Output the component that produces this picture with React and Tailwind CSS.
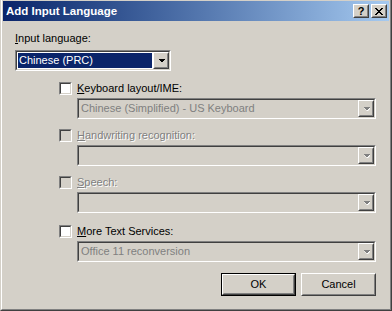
import React from 'react';

const raised =
  'border border-t-white border-l-white border-r-[#404040] border-b-[#404040]';
const raisedInner =
  'border border-t-[#d4d0c8] border-l-[#d4d0c8] border-r-[#808080] border-b-[#808080]';
const sunken =
  'border border-t-[#808080] border-l-[#808080] border-r-white border-b-white';
const sunkenInner =
  'border border-t-[#404040] border-l-[#404040] border-r-[#d4d0c8] border-b-[#d4d0c8]';

function Arrow({ disabled }) {
  return (
    <svg width="7" height="4" viewBox="0 0 7 4" className="block">
      {disabled && <path d="M1 1h7L4.5 4.5z" fill="#fff" />}
      <path d="M0 0h7L3.5 3.5z" fill={disabled ? '#808080' : '#000'} shapeRendering="crispEdges" />
    </svg>
  );
}

function DropButton({ disabled }) {
  return (
    <div className={`w-[16px] h-full ${raised} bg-[#d4d0c8]`}>
      <div className={`w-full h-full ${raisedInner} flex items-center justify-center`}>
        <Arrow disabled={disabled} />
      </div>
    </div>
  );
}

function Check({ disabled }) {
  return (
    <span className={`block w-[13px] h-[13px] shrink-0 ${sunken}`}>
      <span className={`block w-full h-full ${sunkenInner} ${disabled ? 'bg-[#d4d0c8]' : 'bg-white'}`} />
    </span>
  );
}

function Label({ disabled, hot, rest }) {
  return (
    <span
      className={`leading-[13px] ${disabled ? 'text-[#808080] [text-shadow:1px_1px_0_#fff]' : 'text-black'}`}
    >
      <span className="underline underline-offset-[1px]">{hot}</span>
      {rest}
    </span>
  );
}

function Combo({ text }) {
  return (
    <div className={`ml-[74px] mr-[13px] h-[21px] ${sunken}`}>
      <div className={`h-full ${sunkenInner} bg-[#d4d0c8] flex items-stretch`}>
        <div className="flex-1 pl-[2px] flex items-center text-[#808080] leading-[13px]">{text}</div>
        <DropButton disabled />
      </div>
    </div>
  );
}

function Group({ disabled, hot, rest, text, gap }) {
  return (
    <div className={gap}>
      <div className="ml-[56px] flex items-center gap-[5px] h-[13px]">
        <Check disabled={disabled} />
        <Label disabled={disabled} hot={hot} rest={rest} />
      </div>
      <div className="mt-[3px]">
        <Combo text={text} />
      </div>
    </div>
  );
}

function PushButton({ label, isDefault }) {
  const body = (
    <div className={`w-full h-full ${raised}`}>
      <div className={`w-full h-full ${raisedInner} flex items-center justify-center`}>{label}</div>
    </div>
  );
  return (
    <div className={`w-[75px] h-[23px] ${isDefault ? 'border border-black' : ''}`}>{body}</div>
  );
}

export default function App() {
  return (
    <div className="w-[392px] h-[311px] bg-[#d4d0c8] font-['Liberation_Sans',Arial,sans-serif] text-[11px] text-black">
      <div className="w-full h-full border-r border-b border-r-[#404040] border-b-[#404040] border-l border-l-[#d4d0c8]">
        <div className="w-full h-full border-r border-b border-r-[#808080] border-b-[#808080] border-l border-l-white pt-px px-px flex flex-col">
          <div className="h-[20px] shrink-0 bg-linear-to-r from-[#0a246a] to-[#a6caf0] flex items-center pl-[3px] pr-[2px]">
            <span className="text-white font-bold text-[11.5px] leading-[13px]">Add Input Language</span>
            <div className="ml-auto flex items-center gap-[2px]">
              <div className={`w-[16px] h-[14px] ${raised} bg-[#d4d0c8]`}>
                <div className={`w-full h-full ${raisedInner} flex items-center justify-center text-[11px] font-bold leading-none`}>
                  ?
                </div>
              </div>
              <div className={`w-[16px] h-[14px] ${raised} bg-[#d4d0c8]`}>
                <div className={`w-full h-full ${raisedInner} flex items-center justify-center`}>
                  <svg width="8" height="7" viewBox="0 0 8 7" shapeRendering="crispEdges">
                    <path
                      d="M0 0h2v1h1v1h2V1h1V0h2v1H7v1H6v1H5v1h1v1h1v1h1v1H6V6H5V5H3v1H2v1H0V6h1V5h1V4h1V3H2V2H1V1H0z"
                      fill="#000"
                    />
                  </svg>
                </div>
              </div>
            </div>
          </div>

          <div className="flex-1 flex flex-col">
            <div className="mt-[11px] ml-[12px] leading-[13px]">
              <span className="underline underline-offset-[1px]">I</span>nput language:
            </div>
            <div className={`mt-[5px] ml-[12px] w-[156px] h-[21px] ${sunken}`}>
              <div className={`h-full ${sunkenInner} bg-white flex items-stretch`}>
                <div className="flex-1 m-px bg-[#0a246a] text-white flex items-center pl-[1px] leading-[13px]">
                  Chinese (PRC)
                </div>
                <DropButton />
              </div>
            </div>

            <Group gap="mt-[11px]" hot="K" rest="eyboard layout/IME:" text="Chinese (Simplified) - US Keyboard" />
            <Group gap="mt-[10px]" disabled hot="H" rest="andwriting recognition:" text="" />
            <Group gap="mt-[10px]" disabled hot="S" rest="peech:" text="" />
            <Group gap="mt-[12px]" hot="M" rest="ore Text Services:" text="Office 11 reconversion" />

            <div className="mt-[11px] mr-[13px] flex justify-end gap-[5px]">
              <PushButton label="OK" isDefault />
              <PushButton label="Cancel" />
            </div>
          </div>
        </div>
      </div>
    </div>
  );
}
